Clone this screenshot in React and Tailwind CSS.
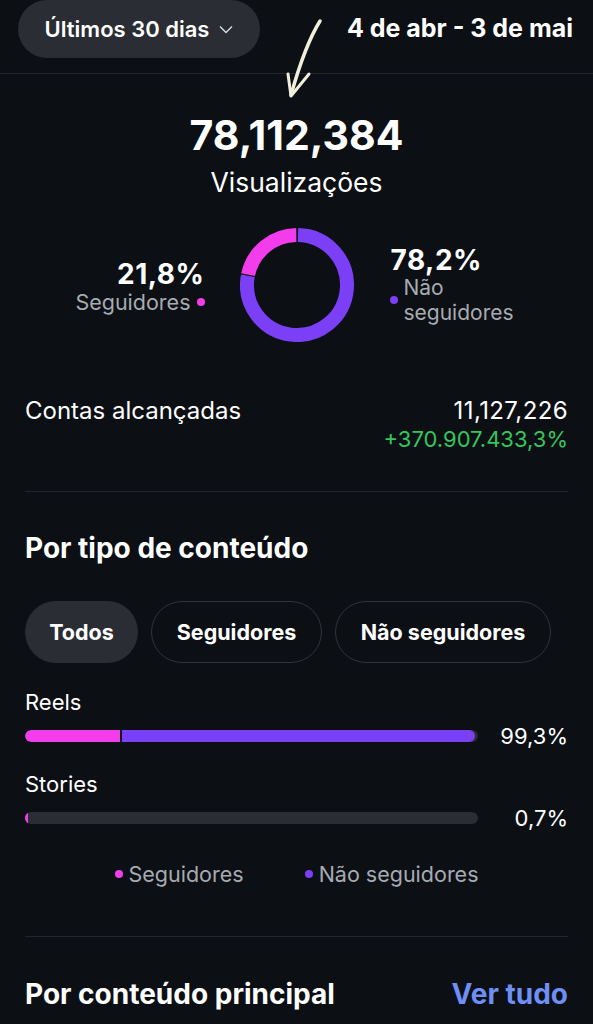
import React from "react";

function polar(cx, cy, r, deg) {
  const a = ((deg - 90) * Math.PI) / 180;
  return [cx + r * Math.cos(a), cy + r * Math.sin(a)];
}
function arc(cx, cy, r, a0, a1) {
  const [x0, y0] = polar(cx, cy, r, a0);
  const [x1, y1] = polar(cx, cy, r, a1);
  const large = a1 - a0 > 180 ? 1 : 0;
  return `M ${x0} ${y0} A ${r} ${r} 0 ${large} 1 ${x1} ${y1}`;
}

function Donut() {
  return (
    <svg width="114" height="114" viewBox="0 0 114 114">
      <path d={arc(57, 57, 50, 1.2, 280.6)} stroke="#7b3ff6" strokeWidth="14" fill="none" />
      <path d={arc(57, 57, 50, 282, 359.2)} stroke="#f33cec" strokeWidth="14" fill="none" />
    </svg>
  );
}

function Dot({ color }) {
  return <span className={`inline-block shrink-0 w-[8px] h-[8px] rounded-full ${color}`} />;
}

export default function App() {
  return (
    <div
      className="relative min-h-screen w-full bg-[#0c0f14] text-white overflow-hidden"
      style={{ fontFamily: "Inter, 'Noto Sans', sans-serif" }}
    >
      {/* header */}
      <div className="flex items-center justify-between pl-[18px] pr-[20px] h-[58px]">
        <div className="h-[58px] w-[242px] rounded-full bg-[#2a2d33] flex items-center justify-center gap-[10px]">
          <span className="text-[22px] font-semibold whitespace-nowrap">Últimos 30 dias</span>
          <svg width="14" height="9" viewBox="0 0 14 9" className="mt-[1px] shrink-0">
            <polyline points="1,1.5 7,7.5 13,1.5" fill="none" stroke="#d9dbe0" strokeWidth="1.4" />
          </svg>
        </div>
        <span className="text-[25px] font-bold whitespace-nowrap">4 de abr - 3 de mai</span>
      </div>
      <div className="mt-[15px] h-px bg-[#22252b]" />

      {/* views */}
      <div className="mt-[39px] text-center">
        <div className="text-[41px] leading-[44px] font-bold">78,112,384</div>
        <div className="mt-[10px] text-[26.5px] leading-[30px]">Visualizações</div>
      </div>

      {/* donut row */}
      <div className="mt-[31px] grid grid-cols-[1fr_auto_1fr] gap-[37px] items-center">
        <div className="flex flex-col items-end pt-[4px]">
          <div className="text-[28px] leading-[30px] font-bold tracking-[0.5px] -mr-[2px]">21,8%</div>
          <div className="flex items-center gap-[6px] text-[21.5px] leading-[26px] text-[#a7abb2] -mr-[2px]">
            <span>Seguidores</span>
            <Dot color="bg-[#f33cec]" />
          </div>
        </div>
        <Donut />
        <div className="flex flex-col items-start">
          <div className="text-[28px] leading-[30px] font-bold tracking-[0.5px]">78,2%</div>
          <div className="flex items-center gap-[6px] text-[21px] leading-[25px] text-[#a7abb2] ml-[-1px]">
            <Dot color="bg-[#7b3ff6]" />
            <div className="flex flex-col">
              <span>Não</span>
              <span>seguidores</span>
            </div>
          </div>
        </div>
      </div>

      {/* contas */}
      <div className="px-[25px]">
        <div className="mt-[55px] flex justify-between">
          <div className="text-[24px] leading-[28px]">Contas alcançadas</div>
          <div className="flex flex-col items-end">
            <div className="text-[24px] leading-[28px] tracking-[0.4px]">11,127,226</div>
            <div className="text-[22px] leading-[28px] text-[#34c65c]">+370.907.433,3%</div>
          </div>
        </div>
        <div className="mt-[38px] h-px bg-[#22252b]" />

        <div className="mt-[41px] text-[28px] leading-[30px] font-bold">Por tipo de conteúdo</div>

        <div className="mt-[38px] flex gap-[13px]">
          <div className="h-[62px] w-[113px] rounded-full bg-[#2a2d33] flex items-center justify-center text-[21.5px] font-bold">
            Todos
          </div>
          <div className="h-[62px] w-[171px] rounded-full border-[1.5px] border-[#30333a] flex items-center justify-center text-[21.5px] font-bold">
            Seguidores
          </div>
          <div className="h-[62px] w-[216px] rounded-full border-[1.5px] border-[#30333a] flex items-center justify-center text-[21.5px] font-bold whitespace-nowrap">
            Não seguidores
          </div>
        </div>

        <div className="mt-[26px] text-[22px] leading-[26px]">Reels</div>
        <div className="mt-[7px] flex items-center h-[28px]">
          <div className="w-[453px] h-[12px] rounded-full bg-[#2a2d33] flex overflow-hidden">
            <div className="w-[95px] h-full bg-[#f33cec] rounded-l-full" />
            <div className="w-[2px] h-full bg-[#0c0f14]" />
            <div className="w-[353px] h-full bg-[#7b3ff6] rounded-r-full" />
          </div>
          <span className="ml-auto text-[22px] leading-[28px]">99,3%</span>
        </div>

        <div className="mt-[21px] text-[22px] leading-[26px]">Stories</div>
        <div className="mt-[7px] flex items-center h-[28px]">
          <div className="w-[453px] h-[12px] rounded-full bg-[#2a2d33] flex overflow-hidden">
            <div className="w-[3px] h-full bg-[#f33cec] rounded-l-full" />
          </div>
          <span className="ml-auto text-[22px] leading-[28px]">0,7%</span>
        </div>

        <div className="mt-[28px] flex justify-center gap-[61px] text-[21.5px] leading-[28px] text-[#a7abb2]">
          <div className="flex items-center gap-[6px]">
            <Dot color="bg-[#f33cec]" />
            <span>Seguidores</span>
          </div>
          <div className="flex items-center gap-[6px]">
            <Dot color="bg-[#7b3ff6]" />
            <span>Não seguidores</span>
          </div>
        </div>

        <div className="mt-[48px] h-px bg-[#22252b]" />

        <div className="mt-[42px] flex justify-between items-center">
          <span className="text-[28px] leading-[30px] font-bold">Por conteúdo principal</span>
          <span className="text-[28px] leading-[30px] font-bold text-[#6e8ff6]">Ver tudo</span>
        </div>
      </div>

      {/* hand-drawn arrow annotation */}
      <svg
        className="absolute left-[270px] top-[15px] pointer-events-none"
        width="60"
        height="90"
        viewBox="0 0 60 90"
      >
        <path
          d="M50 6 C 40 22, 30 48, 21 80"
          stroke="#f1eedb"
          strokeWidth="3.5"
          fill="none"
          strokeLinecap="round"
        />
        <path
          d="M18 59 L 21 81 L 39 59"
          stroke="#f1eedb"
          strokeWidth="3"
          fill="none"
          strokeLinecap="round"
          strokeLinejoin="round"
        />
      </svg>
    </div>
  );
}
